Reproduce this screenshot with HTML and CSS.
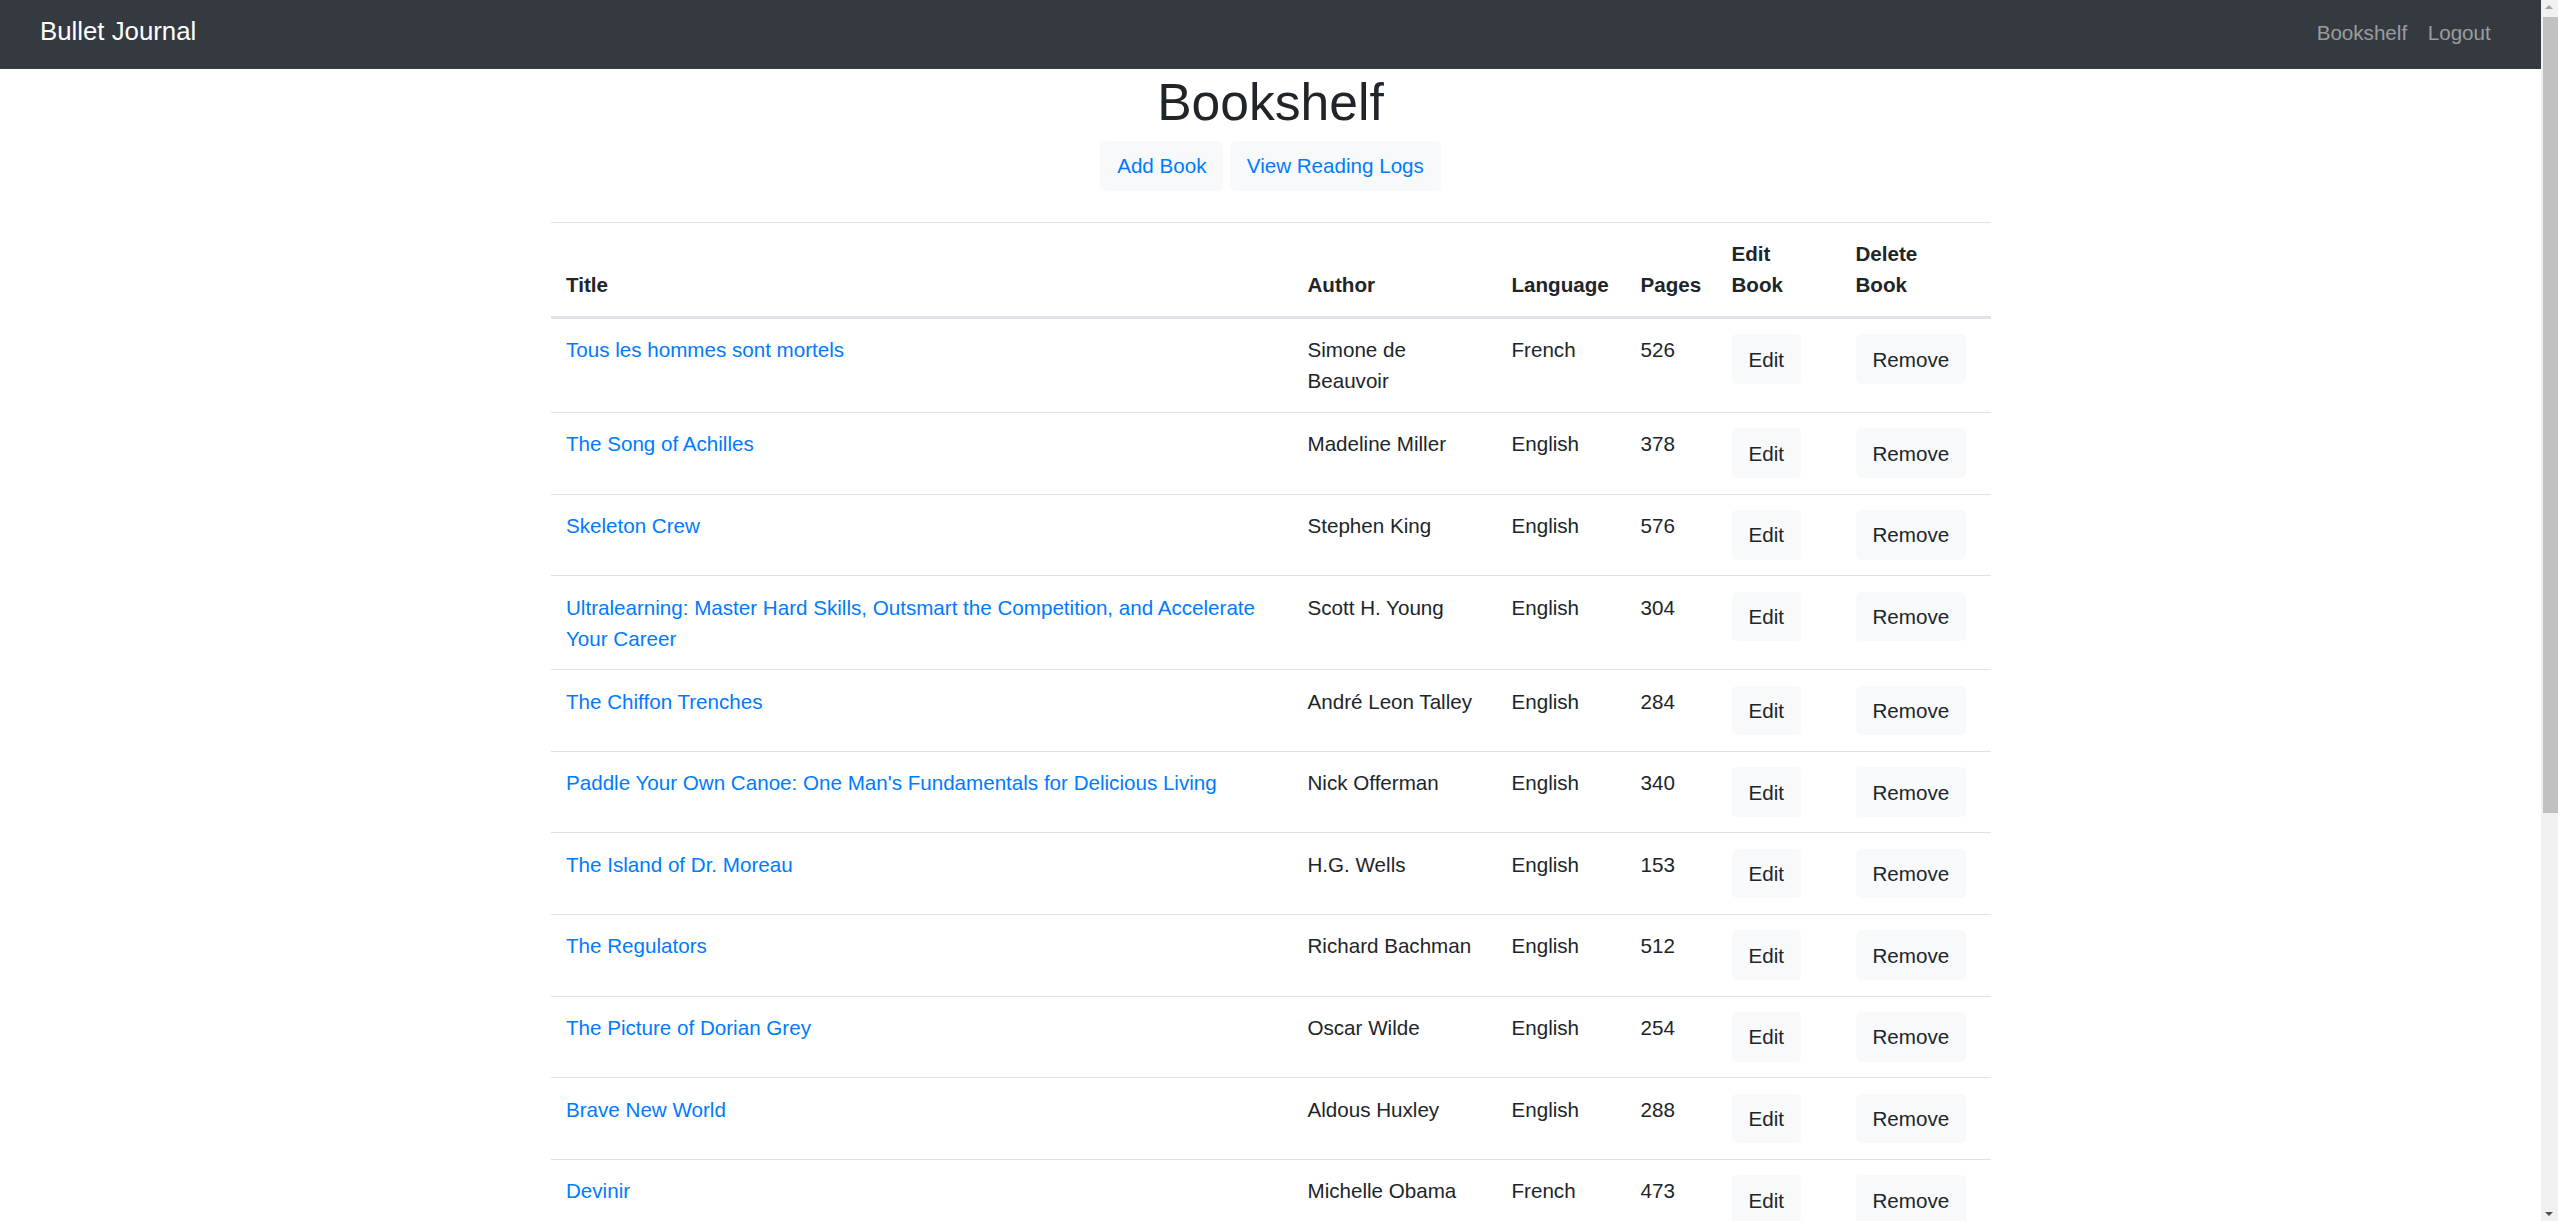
FILE: index.html
```html
<!DOCTYPE html>
<html lang="en">
<head>
<meta charset="utf-8">
<title>Bookshelf</title>
<link rel="stylesheet" href="styles.css">
</head>
<body>
<div class="viewport">
  <nav class="navbar">
    <div class="navbar-inner">
      <a class="brand" href="#">Bullet Journal</a>
      <ul class="nav-links">
        <li><a class="nav-link" href="#">Bookshelf</a></li>
        <li><a class="nav-link" href="#">Logout</a></li>
      </ul>
    </div>
  </nav>
  <main class="page">
    <h1 class="title">Bookshelf</h1>
    <div class="actions">
      <a class="btn btn-blue" href="#">Add Book</a>
      <a class="btn btn-blue" href="#">View Reading Logs</a>
    </div>
    <table class="books">
      <colgroup>
        <col class="c-title"><col class="c-author"><col class="c-lang"><col class="c-pages"><col class="c-edit"><col class="c-del">
      </colgroup>
      <thead>
        <tr><th>Title</th><th>Author</th><th>Language</th><th>Pages</th><th>Edit Book</th><th class="th-del">Delete Book</th></tr>
      </thead>
      <tbody>
        <tr><td><a class="book-link" href="#">Tous les hommes sont mortels</a></td><td>Simone de Beauvoir</td><td>French</td><td>526</td><td><a class="btn" href="#">Edit</a></td><td><button class="btn" type="button">Remove</button></td></tr>
        <tr><td><a class="book-link" href="#">The Song of Achilles</a></td><td>Madeline Miller</td><td>English</td><td>378</td><td><a class="btn" href="#">Edit</a></td><td><button class="btn" type="button">Remove</button></td></tr>
        <tr><td><a class="book-link" href="#">Skeleton Crew</a></td><td>Stephen King</td><td>English</td><td>576</td><td><a class="btn" href="#">Edit</a></td><td><button class="btn" type="button">Remove</button></td></tr>
        <tr><td><a class="book-link" href="#">Ultralearning: Master Hard Skills, Outsmart the Competition, and Accelerate Your Career</a></td><td>Scott H. Young</td><td>English</td><td>304</td><td><a class="btn" href="#">Edit</a></td><td><button class="btn" type="button">Remove</button></td></tr>
        <tr><td><a class="book-link" href="#">The Chiffon Trenches</a></td><td>André Leon Talley</td><td>English</td><td>284</td><td><a class="btn" href="#">Edit</a></td><td><button class="btn" type="button">Remove</button></td></tr>
        <tr><td><a class="book-link" href="#">Paddle Your Own Canoe: One Man's Fundamentals for Delicious Living</a></td><td>Nick Offerman</td><td>English</td><td>340</td><td><a class="btn" href="#">Edit</a></td><td><button class="btn" type="button">Remove</button></td></tr>
        <tr><td><a class="book-link" href="#">The Island of Dr. Moreau</a></td><td>H.G. Wells</td><td>English</td><td>153</td><td><a class="btn" href="#">Edit</a></td><td><button class="btn" type="button">Remove</button></td></tr>
        <tr><td><a class="book-link" href="#">The Regulators</a></td><td>Richard Bachman</td><td>English</td><td>512</td><td><a class="btn" href="#">Edit</a></td><td><button class="btn" type="button">Remove</button></td></tr>
        <tr><td><a class="book-link" href="#">The Picture of Dorian Grey</a></td><td>Oscar Wilde</td><td>English</td><td>254</td><td><a class="btn" href="#">Edit</a></td><td><button class="btn" type="button">Remove</button></td></tr>
        <tr><td><a class="book-link" href="#">Brave New World</a></td><td>Aldous Huxley</td><td>English</td><td>288</td><td><a class="btn" href="#">Edit</a></td><td><button class="btn" type="button">Remove</button></td></tr>
        <tr><td><a class="book-link" href="#">Devinir</a></td><td>Michelle Obama</td><td>French</td><td>473</td><td><a class="btn" href="#">Edit</a></td><td><button class="btn" type="button">Remove</button></td></tr>
      </tbody>
    </table>
  </main>
</div>
<div class="scrollbar" aria-hidden="true">
  <span class="sb-arrow sb-up"></span>
  <span class="sb-thumb"></span>
  <span class="sb-arrow sb-down"></span>
</div>
</body>
</html>
```

FILE: styles.css
```css
* {
  box-sizing: border-box;
}

html,
body {
  margin: 0;
}

body {
  font-family: "Liberation Sans", Arial, sans-serif;
  font-size: 20.6px;
  line-height: 31px;
  color: #212529;
  background: #fff;
}

.viewport {
  margin-right: 17px;
}

.navbar {
  background: #343a40;
  height: 68.5px;
  padding: 0 20.6px;
}

.navbar-inner {
  display: flex;
  justify-content: space-between;
  align-items: flex-start;
  height: 100%;
  padding: 0 19.4px;
}

.brand {
  color: #fff;
  font-size: 25.8px;
  line-height: 38.7px;
  margin-top: 12.2px;
  text-decoration: none;
}

.nav-links {
  display: flex;
  list-style: none;
  margin: 17.4px 0 0;
  padding: 0;
}

.nav-link {
  display: block;
  padding: 0 10.3px;
  color: rgba(255, 255, 255, 0.5);
  text-decoration: none;
}

.page {
  width: 1440px;
  margin: 0 auto;
  padding: 2.6px 0 40px;
}

.title {
  margin: 0 0 7.9px;
  text-align: center;
  font-size: 51.6px;
  line-height: 62px;
  font-weight: 400;
}

.actions {
  display: flex;
  justify-content: center;
  gap: 6.3px;
  margin-bottom: 31.4px;
}

.btn {
  display: inline-block;
  vertical-align: top;
  padding: 8.3px 16px;
  border: 1px solid #f8f9fa;
  border-radius: 5.2px;
  background: #f8f9fa;
  color: #212529;
  font: inherit;
  line-height: 31px;
  text-decoration: none;
  cursor: pointer;
}

.btn-blue {
  color: #007bff;
}

.book-link {
  color: #007bff;
  text-decoration: none;
}

.books {
  width: 100%;
  border-collapse: collapse;
  table-layout: fixed;
}

.c-title { width: 741.5px; }
.c-author { width: 204px; }
.c-lang { width: 129px; }
.c-pages { width: 91px; }
.c-edit { width: 124px; }
.c-del { width: 150.5px; }

.books th,
.books td {
  padding: 15.5px;
  text-align: left;
  vertical-align: top;
  border-top: 1px solid #dee2e6;
}

.books thead th {
  vertical-align: bottom;
  border-bottom: 3px solid #dee2e6;
  font-weight: 700;
}

.books .th-del {
  padding-right: 18px;
}

/* window scrollbar, drawn over the right edge */
.scrollbar {
  position: fixed;
  top: 0;
  right: 0;
  bottom: 0;
  width: 17px;
  background: #f1f1f1;
}

.sb-thumb {
  position: absolute;
  top: 17px;
  left: 2px;
  right: 0;
  height: 796px;
  background: #c1c1c1;
}

.sb-arrow {
  position: absolute;
  left: 4px;
  width: 0;
  height: 0;
  border-left: 4.5px solid transparent;
  border-right: 4.5px solid transparent;
}

.sb-up {
  top: 5px;
  border-bottom: 4.5px solid #a3a3a3;
}

.sb-down {
  bottom: 5px;
  border-top: 4.5px solid #505050;
}
```
